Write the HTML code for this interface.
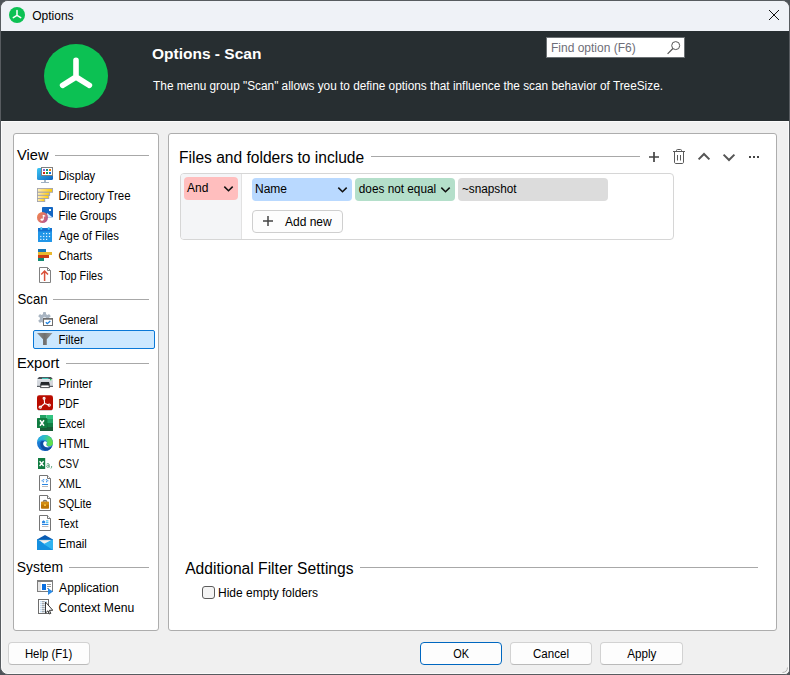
<!DOCTYPE html>
<html>
<head>
<meta charset="utf-8">
<title>Options</title>
<style>
*{box-sizing:border-box;margin:0;padding:0}
html,body{width:790px;height:675px;overflow:hidden;background:#4e5358}
body{font-family:"Liberation Sans",sans-serif;font-size:12px;color:#000;position:relative}
.abs{position:absolute}
.t{position:absolute;white-space:nowrap;line-height:20px;height:20px}
#win{position:absolute;left:0;top:0;width:790px;height:675px;background:#f0f0f0;border-radius:8px 8px 5px 8px;overflow:hidden;border:1px solid #585c60}
#tb{position:absolute;left:0;top:0;width:788px;height:30px;background:#eff2f7}
#hd{position:absolute;left:0;top:30px;width:788px;height:90px;background:#272e31}
.panel{position:absolute;background:#fff;border:1px solid #adadad;border-radius:3px}
.hl{position:absolute;height:1px;background:#a8a8a8}
.h{position:absolute;white-space:nowrap;font-size:14.67px;line-height:24px;height:24px;color:#000}
.btn{position:absolute;height:23px;border:1px solid #d2d2d2;border-bottom-color:#bababa;border-radius:4px;background:#fdfdfd;text-align:center;line-height:21px;font-size:12px}
.pill{position:absolute;height:23px;border-radius:4px}
</style>
</head>
<body>
<div id="win">
  <!-- coordinates inside #win are offset by the 1px border: inner x = page x - 1 -->
  <div id="tb"></div>
  <div id="hd"></div>
  <div class="abs" style="left:0;top:120px;width:788px;height:553px;border:1px solid #fafafa;border-radius:0 0 4px 7px"></div>
</div>

<!-- everything below is positioned in page coordinates -->
<!-- title bar -->
<svg class="abs" style="left:8px;top:6px" width="18" height="18" viewBox="0 0 18 18">
  <circle cx="9" cy="9" r="8" fill="#0cc153"/>
  <g stroke="#fff" stroke-width="1.5" stroke-linecap="round" fill="none">
    <path d="M9 4.6V9.4M9 9.4L5.3 11.7M9 9.4L12.7 11.7"/>
  </g>
</svg>
<span class="t" id="ttl" style="transform-origin:0 50%;transform:translateX(1.20px) scaleX(1.0000);left:31px;top:6px">Options</span>
<svg class="abs" style="left:768px;top:9px" width="12" height="12" viewBox="0 0 12 12">
  <path d="M1 1L11 11M11 1L1 11" stroke="#111" stroke-width="1" fill="none"/>
</svg>

<!-- header -->
<svg class="abs" style="left:42px;top:42px" width="68" height="68" viewBox="0 0 68 68">
  <circle cx="34" cy="34" r="32" fill="#0cc153"/>
  <g stroke="#fff" stroke-width="5.6" stroke-linecap="round" fill="none">
    <path d="M34 18.3V35M34 35L20.6 43.3M34 35L47.4 43.3"/>
  </g>
</svg>
<span class="t" id="htitle" style="transform-origin:0 50%;transform:translateX(0.00px) scaleX(1.0000);left:152px;top:44px;font-size:15.5px;font-weight:bold;color:#fff">Options - Scan</span>
<span class="t" id="hdesc" style="transform-origin:0 50%;transform:translateX(1.10px) scaleX(0.9840);left:152px;top:76px;color:#fff">The menu group "Scan" allows you to define options that influence the scan behavior of TreeSize.</span>
<div class="abs" style="left:546px;top:37px;width:139px;height:21px;background:#fff;border:1px solid #6b7073"></div>
<span class="t" id="find" style="transform-origin:0 50%;transform:translateX(0.00px) scaleX(1.0000);left:551px;top:38px;color:#6e6e78">Find option (F6)</span>
<svg class="abs" style="left:665px;top:40px" width="17" height="16" viewBox="0 0 17 16">
  <circle cx="10.7" cy="5.6" r="4" fill="none" stroke="#555" stroke-width="1"/>
  <path d="M7.9 8.5L2.6 13.8" stroke="#555" stroke-width="1.2" fill="none"/>
</svg>

<!-- panels -->
<div class="panel" style="left:13px;top:133px;width:146px;height:498px"></div>
<div class="panel" style="left:168px;top:133px;width:609px;height:498px"></div>

<!-- LEFT MENU -->
<div class="abs" style="left:33px;top:330px;width:122px;height:19px;background:#cce8ff;border:1px solid #0a78d7;border-radius:2px"></div><svg class="abs" style="left:37px;top:167px" width="16" height="16" viewBox="0 0 16 16"><defs><linearGradient id="gd" x1="0" y1="0" x2="1" y2="1"><stop offset="0" stop-color="#3cc8f4"/><stop offset="1" stop-color="#0f63c0"/></linearGradient></defs>
<rect x="0" y="1" width="16" height="12" rx="1.5" fill="url(#gd)"/>
<rect x="7" y="13" width="2" height="2" fill="#a9b7c6"/><rect x="4" y="15" width="8" height="1" fill="#9fb0c2"/>
<rect x="4.5" y=".5" width="11" height="8" fill="#fff" stroke="#808080" stroke-width="1"/>
<rect x="6" y="2" width="2" height="2" fill="#8a63d2"/><rect x="9" y="2" width="2" height="2" fill="#0f8f8f"/><rect x="12" y="2" width="2" height="2" fill="#f07800"/>
<rect x="6" y="5" width="2" height="2" fill="#d9260f"/><rect x="9" y="5" width="2" height="2" fill="#1f9e3f"/><rect x="12" y="5" width="2" height="2" fill="#0a6fe0"/></svg>
<svg class="abs" style="left:37px;top:187px" width="16" height="16" viewBox="0 0 16 16"><defs><linearGradient id="gy" x1="0" y1="0" x2="1" y2="0"><stop offset="0" stop-color="#fff6bf"/><stop offset=".25" stop-color="#ffe28a"/><stop offset="1" stop-color="#ffcb00"/></linearGradient></defs>
<g fill="url(#gy)" stroke="#a3a3ad" stroke-width=".9">
<rect x=".45" y="1.45" width="15.1" height="3.8"/><rect x=".45" y="5.25" width="12.2" height="3.1"/><rect x=".45" y="8.35" width="11.3" height="3.1"/><rect x=".45" y="11.45" width="7.3" height="3.1"/></g></svg>
<svg class="abs" style="left:37px;top:207px" width="16" height="16" viewBox="0 0 16 16"><defs><linearGradient id="gfg" x1="0" y1="0" x2="1" y2=".6"><stop offset="0" stop-color="#f2874c"/><stop offset=".55" stop-color="#dd7468"/><stop offset="1" stop-color="#b3568f"/></linearGradient></defs>
<rect x="5" y="0" width="11" height="10.4" rx=".8" fill="#1467c4"/>
<path d="M10.3 6L15.7 10.4H8Z" fill="#d9ecfb"/>
<rect x="12" y="2" width="2" height="2" fill="#fffef2"/>
<circle cx="5.5" cy="10.5" r="5.5" fill="url(#gfg)"/>
<path d="M6.3 8V12.4" stroke="#fff" stroke-width="1" fill="none"/><path d="M5.8 7.7L8.2 8.5V9.7L5.8 8.9Z" fill="#fff"/><ellipse cx="5" cy="12.6" rx="1.5" ry="1.2" fill="#fff"/></svg>
<svg class="abs" style="left:37px;top:227px" width="16" height="16" viewBox="0 0 16 16"><rect x="1" y="1" width="14" height="14" rx=".6" fill="#2196e8"/><rect x="1" y="1" width="14" height="3.4" fill="#1572cf"/>
<rect x="3.4" y="0" width="1.8" height="2.8" rx=".5" fill="#52d0f5"/><rect x="10.8" y="0" width="1.8" height="2.8" rx=".5" fill="#52d0f5"/>
<g fill="#e9f5ff"><rect x="6.1" y="6" width="1.2" height="1.2"/><rect x="9" y="6" width="1.2" height="1.2"/><rect x="11.9" y="6" width="1.2" height="1.2"/>
<rect x="3.2" y="8.9" width="1.2" height="1.2"/><rect x="6.1" y="8.9" width="1.2" height="1.2"/><rect x="9" y="8.9" width="1.2" height="1.2"/><rect x="11.9" y="8.9" width="1.2" height="1.2"/>
<rect x="3.2" y="11.8" width="1.2" height="1.2"/><rect x="6.1" y="11.8" width="1.2" height="1.2"/><rect x="9" y="11.8" width="1.2" height="1.2"/></g></svg>
<svg class="abs" style="left:37px;top:247px" width="16" height="16" viewBox="0 0 16 16"><rect x="1" y="2" width="8" height="3" fill="#1b78b6"/><rect x="1" y="5" width="14" height="3" fill="#e9b92f"/><rect x="1" y="8" width="11" height="3" fill="#cc3e15"/><rect x="1" y="11" width="6" height="3" fill="#128a72"/></svg>
<svg class="abs" style="left:37px;top:267px" width="16" height="16" viewBox="0 0 16 16"><path d="M2.5 .5H10.5L13.5 3.5V15.5H2.5Z" fill="#fff" stroke="#808080" stroke-width="1" stroke-linejoin="round"/><path d="M10.5 .5V3.5H13.5" fill="none" stroke="#808080" stroke-width="1"/>
<path d="M7.6 14V4M4.2 7.6L7.6 4.1L11 7.6" fill="none" stroke="#d9513a" stroke-width="1.5"/></svg>
<svg class="abs" style="left:37px;top:311px" width="16" height="16" viewBox="0 0 16 16"><g fill="#a9b5c2"><circle cx="7.5" cy="7.5" r="4.6"/>
<g transform="translate(7.5 7.5)"><rect x="-1.5" y="-6.5" width="3" height="13" rx=".8"/><rect x="-1.5" y="-6.5" width="3" height="13" rx=".8" transform="rotate(60)"/><rect x="-1.5" y="-6.5" width="3" height="13" rx=".8" transform="rotate(120)"/></g></g>
<circle cx="7.5" cy="7.5" r="1.8" fill="#dfe5ec"/>
<rect x="6.5" y="7.5" width="9" height="7" fill="#fff" stroke="#6d6d6d" stroke-width="1"/><rect x="6" y="7" width="10" height="1.7" fill="#6d6d6d"/>
<path d="M8.8 11.3L10.3 12.7L13.3 9.9" fill="none" stroke="#1a7fe0" stroke-width="1.3"/></svg>
<svg class="abs" style="left:37px;top:331px" width="16" height="16" viewBox="0 0 16 16"><defs><linearGradient id="gf" x1="0" y1="0" x2="1" y2="0"><stop offset="0" stop-color="#8c8c8c"/><stop offset=".5" stop-color="#6f6f6f"/><stop offset="1" stop-color="#9a9a9a"/></linearGradient></defs>
<path d="M0 2H15.5L9.8 8.3V14H6V8.3Z" fill="url(#gf)"/></svg>
<svg class="abs" style="left:37px;top:375px" width="16" height="16" viewBox="0 0 16 16"><path d="M2 2H14L16 4.3H0Z" fill="#4b5057"/><rect x="5" y="2.9" width="6.5" height="1" fill="#3fd3c4"/>
<rect x="0" y="4.3" width="16" height="7.7" rx=".6" fill="#d3d7dd"/><rect x="0" y="4.3" width="16" height="1" fill="#e9ecf0"/><rect x="0" y="10.8" width="16" height="1.2" fill="#5a5f66"/>
<rect x="13" y="3.9" width="1.4" height="1.4" fill="#1fd14a"/>
<path d="M4 7H12L13 10.5H3Z" fill="#23262a"/>
<path d="M3.4 12.6L4.2 10H11.8L12.6 12.6Z" fill="#fff" stroke="#3a3d42" stroke-width=".9"/></svg>
<svg class="abs" style="left:37px;top:395px" width="16" height="16" viewBox="0 0 16 16"><rect x="0" y=".2" width="16" height="15" rx="2.2" fill="#b90c00"/><rect x="1" y="15" width="14" height=".7" fill="#c9cfd6"/>
<g fill="none" stroke="#fff" stroke-width="1.1" stroke-linecap="round"><path d="M7.2 3.6L7.6 8.4L3.6 12M7.6 8.4L11.8 10"/><circle cx="7.1" cy="3.2" r="1"/><circle cx="3.2" cy="12.2" r="1.1"/><circle cx="12.2" cy="10.1" r="1.1"/></g></svg>
<svg class="abs" style="left:37px;top:415px" width="16" height="16" viewBox="0 0 16 16"><rect x="3" y="0" width="6.5" height="4" fill="#21a366"/><rect x="9.5" y="0" width="6.5" height="4" fill="#33c481"/>
<rect x="3" y="4" width="6.5" height="4" fill="#107c41"/><rect x="9.5" y="4" width="6.5" height="4" fill="#21a366"/>
<rect x="3" y="8" width="13" height="4" fill="#128044"/><rect x="3" y="12" width="13" height="4" fill="#185c37"/>
<rect x="4" y="3.6" width="6.6" height="10" fill="#0b5a2e" opacity=".45"/>
<rect x="0" y="3" width="10" height="10" rx=".5" fill="#107c41"/>
<path d="M3 5.2L7 10.8M7 5.2L3 10.8" stroke="#fff" stroke-width="1.5" fill="none"/></svg>
<svg class="abs" style="left:37px;top:435px" width="16" height="16" viewBox="0 0 16 16"><defs><linearGradient id="ge1" x1="0" y1="0" x2=".3" y2="1"><stop offset="0" stop-color="#2aa8ea"/><stop offset=".5" stop-color="#1a7cd4"/><stop offset="1" stop-color="#1262c4"/></linearGradient>
<linearGradient id="ge2" x1="0" y1="0" x2="1" y2=".25"><stop offset="0" stop-color="#22a6ea"/><stop offset=".45" stop-color="#2fbfc6"/><stop offset=".8" stop-color="#4fd769"/><stop offset="1" stop-color="#62df4a"/></linearGradient></defs>
<circle cx="8" cy="8" r="8" fill="url(#ge1)"/>
<path d="M.7 4.8A8 8 0 0 1 16 8C16 10.4 14.2 11.2 12.2 11.2C10.6 11.2 9.5 10.6 9.4 9.6C9.4 8.9 10.2 8.5 10.2 7.6C10.2 6.2 8.6 4.8 6.4 4.8C4.4 4.8 2.4 5.2 .7 6.6Z" fill="url(#ge2)"/>
<path d="M7.4 6.4C5.8 7 5.8 10 7.6 11.4C9.6 13 13.2 12.8 15.1 11.1C13.4 12 10.8 11.9 9.6 10.4C8.9 9.4 9.7 8.6 9.9 7.8C10 6.9 8.7 6 7.4 6.4Z" fill="#fff"/>
<path d="M3.4 7.4C2.6 12 6.4 16.4 10.8 15.4C12.8 14.8 14.4 13 15.1 11.1C12.8 13.2 8.8 13.2 6.9 11.3C5.3 9.6 5.6 6.8 7.4 6.2C6 5.8 4 6 3.4 7.4Z" fill="#0d4ca2"/></svg>
<svg class="abs" style="left:37px;top:455px" width="16" height="16" viewBox="0 0 16 16"><rect x="1" y="3" width="7.2" height="11" fill="#107c41"/><path d="M2.6 6.2L6.6 11M6.6 6.2L2.6 11" stroke="#fff" stroke-width="1.4" fill="none"/>
<g fill="none" stroke="#4a9b70" stroke-width=".85"><path d="M9.7 9C10.3 8.4 11.6 8.4 12.1 9.1V12.7M12.1 10.3H10.5C9.4 10.3 9.4 12.4 10.5 12.4C11.3 12.4 12.1 12 12.1 11.2"/><path d="M14.6 11V12.2L13.9 13.5"/></g></svg>
<svg class="abs" style="left:37px;top:475px" width="16" height="16" viewBox="0 0 16 16"><path d="M2.5 .5H10.5L13.5 3.5V15.5H2.5Z" fill="#fff" stroke="#757575" stroke-width="1" stroke-linejoin="round"/><path d="M10.5 .5V3.5H13.5" fill="#fff" stroke="#757575" stroke-width="1" stroke-linejoin="round"/><g fill="#2a86e2"><rect x="4.6" y="5.2" width="1.1" height="1.1"/><rect x="5.8" y="4.2" width="1.1" height="1.1"/><rect x="5.8" y="6.2" width="1.1" height="1.1"/><rect x="9" y="4.2" width="1.1" height="1.1"/><rect x="9" y="6.2" width="1.1" height="1.1"/><rect x="10.2" y="5.2" width="1.1" height="1.1"/><rect x="7.4" y="4.4" width=".9" height=".9" opacity=".6"/></g>
<rect x="5" y="9" width="6" height="1" fill="#2a86e2"/><rect x="5" y="11.2" width="6" height=".8" fill="#a9a9a9"/></svg>
<svg class="abs" style="left:37px;top:495px" width="16" height="16" viewBox="0 0 16 16"><path d="M2.5 .5H10.5L13.5 3.5V15.5H2.5Z" fill="#fff" stroke="#757575" stroke-width="1" stroke-linejoin="round"/><path d="M10.5 .5V3.5H13.5" fill="#fff" stroke="#757575" stroke-width="1" stroke-linejoin="round"/><rect x="6.4" y="5.4" width="3.2" height="1.6" rx=".6" fill="none" stroke="#555" stroke-width=".9"/>
<rect x="4" y="6.8" width="8" height="7" rx=".7" fill="#bd7406"/><rect x="4" y="6.8" width="8" height="3" rx=".7" fill="#d18b12"/><rect x="7" y="9.4" width="2" height="1.4" fill="#ffd34d"/></svg>
<svg class="abs" style="left:37px;top:515px" width="16" height="16" viewBox="0 0 16 16"><path d="M2.5 .5H10.5L13.5 3.5V15.5H2.5Z" fill="#fff" stroke="#757575" stroke-width="1" stroke-linejoin="round"/><path d="M10.5 .5V3.5H13.5" fill="#fff" stroke="#757575" stroke-width="1" stroke-linejoin="round"/><path d="M5 8.2V6.6L6.6 5.2L8.2 6.6V8.2Z" fill="#2a86e2"/><rect x="9" y="5.4" width="2.4" height="1" fill="#35b8f2"/><rect x="9" y="7.2" width="2.4" height="1" fill="#35b8f2"/>
<rect x="5" y="9" width="6.4" height="1" fill="#2a86e2"/><rect x="5" y="11.2" width="6.4" height=".8" fill="#a9a9a9"/></svg>
<svg class="abs" style="left:37px;top:535px" width="16" height="16" viewBox="0 0 16 16"><path d="M0 4.6L8 0L16 4.6V5.5H0Z" fill="#0b5cb3"/><rect x="0" y="4.6" width="16" height="10.4" fill="#1d9ce6"/>
<path d="M0 4.6H16V6.2L8 10.6L0 6.2Z" fill="#2cb3f0" opacity=".0"/>
<path d="M2 5H14L8 9.6Z" fill="#f1f1f1"/><path d="M2 5H14L13 5.8H3Z" fill="#d6d6d6"/>
<path d="M0 4.6L16 15H0Z" fill="#1590e0"/><path d="M16 4.6V15L6.6 9Z" fill="#32b4f0"/><path d="M0 4.6V15L9.4 9Z" fill="#1c9be8" opacity=".0"/></svg>
<svg class="abs" style="left:37px;top:579px" width="16" height="16" viewBox="0 0 16 16"><rect x=".5" y="1.5" width="15" height="11" fill="#fff" stroke="#7e7e7e" stroke-width="1"/><rect x="0" y="1" width="16" height="2" fill="#7e7e7e"/>
<rect x="1" y="3" width="3" height="9" fill="#e6e6e6"/><rect x="5" y="5" width="4" height="6" fill="#0a6fe0"/>
<rect x="10" y="5" width="4" height="1" fill="#9a9a9a"/><rect x="10" y="7" width="4" height="1" fill="#9a9a9a"/><rect x="10" y="9" width="2" height="1" fill="#9a9a9a"/>
<path d="M11 9.2L16 12.5L11 16Z" fill="#2b8be6"/></svg>
<svg class="abs" style="left:37px;top:599px" width="16" height="16" viewBox="0 0 16 16"><rect x="1.5" y=".5" width="10" height="14" fill="#fff" stroke="#6e6e6e" stroke-width="1"/>
<g fill="#b9d6f2"><rect x="3" y="2.2" width="7" height="1"/><rect x="3" y="4.2" width="7" height="1"/><rect x="3" y="6.2" width="7" height="1"/><rect x="3" y="8.2" width="7" height="1"/><rect x="3" y="10.2" width="7" height="1"/><rect x="3" y="12.2" width="7" height="1"/></g>
<g fill="#9a9a9a"><rect x="5" y="2.2" width="2.5" height="1"/><rect x="5" y="4.2" width="2.5" height="1"/><rect x="5" y="6.2" width="2.5" height="1"/><rect x="5" y="8.2" width="2.5" height="1"/><rect x="5" y="10.2" width="2.5" height="1"/><rect x="5" y="12.2" width="2.5" height="1"/></g>
<path d="M8.5 3V14L11 11.8L12.4 15L13.8 14.4L12.4 11.3H15.8Z" fill="#fff" stroke="#222" stroke-width=".9" stroke-linejoin="round"/></svg><span class="h" id="h_view" style="transform-origin:0 50%;transform:translateX(0.00px) scaleX(1.0000);left:17px;top:143.4px">View</span>
<div class="hl" style="left:55px;top:155px;width:94px"></div>
<span class="t" id="m_display" style="transform-origin:0 50%;transform:translateX(0.49px) scaleX(0.9332);left:58px;top:166px">Display</span>
<span class="t" id="m_directorytree" style="transform-origin:0 50%;transform:translateX(0.50px) scaleX(0.9560);left:58px;top:186px">Directory Tree</span>
<span class="t" id="m_filegroups" style="transform-origin:0 50%;transform:translateX(0.50px) scaleX(0.9387);left:58px;top:206px">File Groups</span>
<span class="t" id="m_ageoffiles" style="transform-origin:0 50%;transform:translateX(0.99px) scaleX(0.9462);left:58px;top:226px">Age of Files</span>
<span class="t" id="m_charts" style="transform-origin:0 50%;transform:translateX(0.50px) scaleX(0.9514);left:58px;top:246px">Charts</span>
<span class="t" id="m_topfiles" style="transform-origin:0 50%;transform:translateX(0.99px) scaleX(0.9086);left:58px;top:266px">Top Files</span>
<span class="h" id="h_scan" style="transform-origin:0 50%;transform:translateX(0.60px) scaleX(0.8970);left:17px;top:287.4px">Scan</span>
<div class="hl" style="left:53px;top:299px;width:96px"></div>
<span class="t" id="m_general" style="transform-origin:0 50%;transform:translateX(0.99px) scaleX(0.9100);left:58px;top:310px">General</span>
<span class="t" id="m_filter" style="transform-origin:0 50%;transform:translateX(0.50px) scaleX(0.9481);left:58px;top:330px">Filter</span>
<span class="h" id="h_export" style="transform-origin:0 50%;transform:translateX(0.00px) scaleX(1.0000);left:17px;top:351.4px">Export</span>
<div class="hl" style="left:66px;top:363px;width:83px"></div>
<span class="t" id="m_printer" style="transform-origin:0 50%;transform:translateX(0.50px) scaleX(0.9556);left:58px;top:374px">Printer</span>
<span class="t" id="m_pdf" style="transform-origin:0 50%;transform:translateX(0.50px) scaleX(0.8542);left:58px;top:394px">PDF</span>
<span class="t" id="m_excel" style="transform-origin:0 50%;transform:translateX(0.50px) scaleX(0.9000);left:58px;top:414px">Excel</span>
<span class="t" id="m_html" style="transform-origin:0 50%;transform:translateX(0.50px) scaleX(0.9455);left:58px;top:434px">HTML</span>
<span class="t" id="m_csv" style="transform-origin:0 50%;transform:translateX(0.50px) scaleX(0.8200);left:58px;top:454px">CSV</span>
<span class="t" id="m_xml" style="transform-origin:0 50%;transform:translateX(0.50px) scaleX(0.9160);left:58px;top:474px">XML</span>
<span class="t" id="m_sqlite" style="transform-origin:0 50%;transform:translateX(0.50px) scaleX(0.9000);left:58px;top:494px">SQLite</span>
<span class="t" id="m_text" style="transform-origin:0 50%;transform:translateX(0.50px) scaleX(0.8913);left:58px;top:514px">Text</span>
<span class="t" id="m_email" style="transform-origin:0 50%;transform:translateX(0.48px) scaleX(0.9446);left:58px;top:534px">Email</span>
<span class="h" id="h_system" style="transform-origin:0 50%;transform:translateX(-0.21px) scaleX(0.9472);left:17px;top:555.4px">System</span>
<div class="hl" style="left:69px;top:567px;width:80px"></div>
<span class="t" id="m_application" style="transform-origin:0 50%;transform:translateX(0.99px) scaleX(1.0175);left:58px;top:578px">Application</span>
<span class="t" id="m_contextmenu" style="transform-origin:0 50%;transform:translateX(0.50px) scaleX(1.0149);left:58px;top:598px">Context Menu</span>

<!-- RIGHT -->
<span class="h" id="h_files" style="transform-origin:0 50%;transform:translateX(0.03px) scaleX(0.9725);font-size:16px;left:179px;top:146px">Files and folders to include</span>
<div class="hl" style="left:371px;top:156px;width:269px"></div>

<div class="abs" style="left:180px;top:173px;width:494px;height:67px;border:1px solid #d6d6d6;border-radius:4px;background:#fff;overflow:hidden">
  <div class="abs" style="left:0;top:0;width:61px;height:65px;background:#f4f5f7;border-right:1px solid #e2e2e2"></div>
</div>
<div class="pill" style="left:184px;top:177px;width:54px;background:#ffbebe"></div>
<span class="t" id="p_and" style="transform-origin:0 50%;transform:translateX(0.00px) scaleX(1.0000);left:187px;top:178px">And</span>
<div class="pill" style="left:252px;top:178px;width:100px;background:#b9d9ff"></div>
<span class="t" id="p_name" style="transform-origin:0 50%;transform:translateX(0.00px) scaleX(1.0000);left:255px;top:179px">Name</span>
<div class="pill" style="left:355px;top:178px;width:100px;background:#b4dfca"></div>
<span class="t" id="p_dne" style="transform-origin:0 50%;transform:translateX(0.80px) scaleX(0.9821);left:358px;top:179px">does not equal</span>
<div class="pill" style="left:458px;top:178px;width:150px;background:#dcdcdc"></div>
<span class="t" id="p_snap" style="transform-origin:0 50%;transform:translateX(0.90px) scaleX(0.9821);left:461px;top:179px">~snapshot</span>
<div class="btn" style="left:252px;top:210px;width:91px;border-color:#cfcfcf"></div>
<span class="t" id="p_add" style="transform-origin:0 50%;transform:translateX(0.00px) scaleX(1.0000);left:285px;top:212px">Add new</span>

<span class="h" id="h_add" style="transform-origin:0 50%;transform:translateX(1.19px) scaleX(0.9757);font-size:16px;left:184px;top:557px">Additional Filter Settings</span>
<div class="hl" style="left:360px;top:567px;width:398px"></div>
<div class="abs" style="left:202px;top:586px;width:13px;height:13px;border:1px solid #5c5c5c;border-radius:3px;background:#f4f4f4"></div>
<span class="t" id="c_hide" style="transform-origin:0 50%;transform:translateX(0.00px) scaleX(1.0000);left:218px;top:583px">Hide empty folders</span>


<!-- pill chevrons -->
<svg class="abs" style="left:223px;top:185px" width="11" height="8" viewBox="0 0 11 8"><path d="M1.3 1.6L5.5 5.8L9.7 1.6" fill="none" stroke="#111" stroke-width="1.5"/></svg>
<svg class="abs" style="left:337px;top:186px" width="11" height="8" viewBox="0 0 11 8"><path d="M1.3 1.6L5.5 5.8L9.7 1.6" fill="none" stroke="#111" stroke-width="1.5"/></svg>
<svg class="abs" style="left:440px;top:186px" width="11" height="8" viewBox="0 0 11 8"><path d="M1.3 1.6L5.5 5.8L9.7 1.6" fill="none" stroke="#111" stroke-width="1.5"/></svg>
<!-- add new plus -->
<svg class="abs" style="left:262px;top:215px" width="12" height="12" viewBox="0 0 12 12"><path d="M6 1V11M1 6H11" fill="none" stroke="#444" stroke-width="1.5"/></svg>
<!-- toolbar -->
<svg class="abs" style="left:648px;top:151px" width="12" height="12" viewBox="0 0 12 12"><path d="M6 1V11M1 6H11" fill="none" stroke="#444" stroke-width="1.7"/></svg>
<svg class="abs" style="left:672px;top:148px" width="14" height="17" viewBox="0 0 14 17">
  <g fill="none" stroke="#5a5a5a" stroke-width="1">
    <path d="M1 3.5H13"/><path d="M4.5 3.3V2.4C4.5 1.6 5 1.5 5.6 1.5H8.4C9 1.5 9.5 1.6 9.5 2.4V3.3"/>
    <path d="M2.5 3.7V14C2.5 15 3 15.5 4 15.5H10C11 15.5 11.5 15 11.5 14V3.7"/>
    <path d="M5.5 7V12.5M8.5 7V12.5"/>
  </g>
</svg>
<svg class="abs" style="left:697px;top:151px" width="14" height="11" viewBox="0 0 14 11"><path d="M1.6 8.4L7 3L12.4 8.4" fill="none" stroke="#555" stroke-width="2"/></svg>
<svg class="abs" style="left:722px;top:152px" width="14" height="11" viewBox="0 0 14 11"><path d="M1.6 2.6L7 8L12.4 2.6" fill="none" stroke="#555" stroke-width="2"/></svg>
<svg class="abs" style="left:748px;top:155px" width="12" height="4" viewBox="0 0 12 4"><rect x="1" y="1" width="2" height="2" fill="#444"/><rect x="5" y="1" width="2" height="2" fill="#444"/><rect x="9" y="1" width="2" height="2" fill="#444"/></svg>
<!-- resize grip -->
<svg class="abs" style="left:780px;top:665px" width="8" height="8" viewBox="0 0 8 8"><path d="M7.5 2.5C7.5 5.5 5.5 7.5 2.5 7.5" stroke="#b5b5b5" stroke-width="1" fill="none"/></svg>
<!-- buttons -->
<div class="btn" style="left:8px;top:642px;width:82px"></div>
<span class="t" id="b_help" style="transform-origin:0 50%;transform:translateX(-0.11px) scaleX(0.9464);left:25px;top:644px">Help (F1)</span>
<div class="btn" style="left:420px;top:642px;width:82px;border-color:#0067c0"></div>
<span class="t" id="b_ok" style="transform-origin:0 50%;transform:translateX(0.30px) scaleX(0.9059);left:453px;top:644px">OK</span>
<div class="btn" style="left:510px;top:642px;width:82px"></div>
<span class="t" id="b_cancel" style="transform-origin:0 50%;transform:translateX(0.00px) scaleX(0.9622);left:533px;top:644px">Cancel</span>
<div class="btn" style="left:600px;top:642px;width:83px"></div>
<span class="t" id="b_apply" style="transform-origin:0 50%;transform:translateX(1.18px) scaleX(0.9710);left:626px;top:644px">Apply</span>
</body>
</html>
